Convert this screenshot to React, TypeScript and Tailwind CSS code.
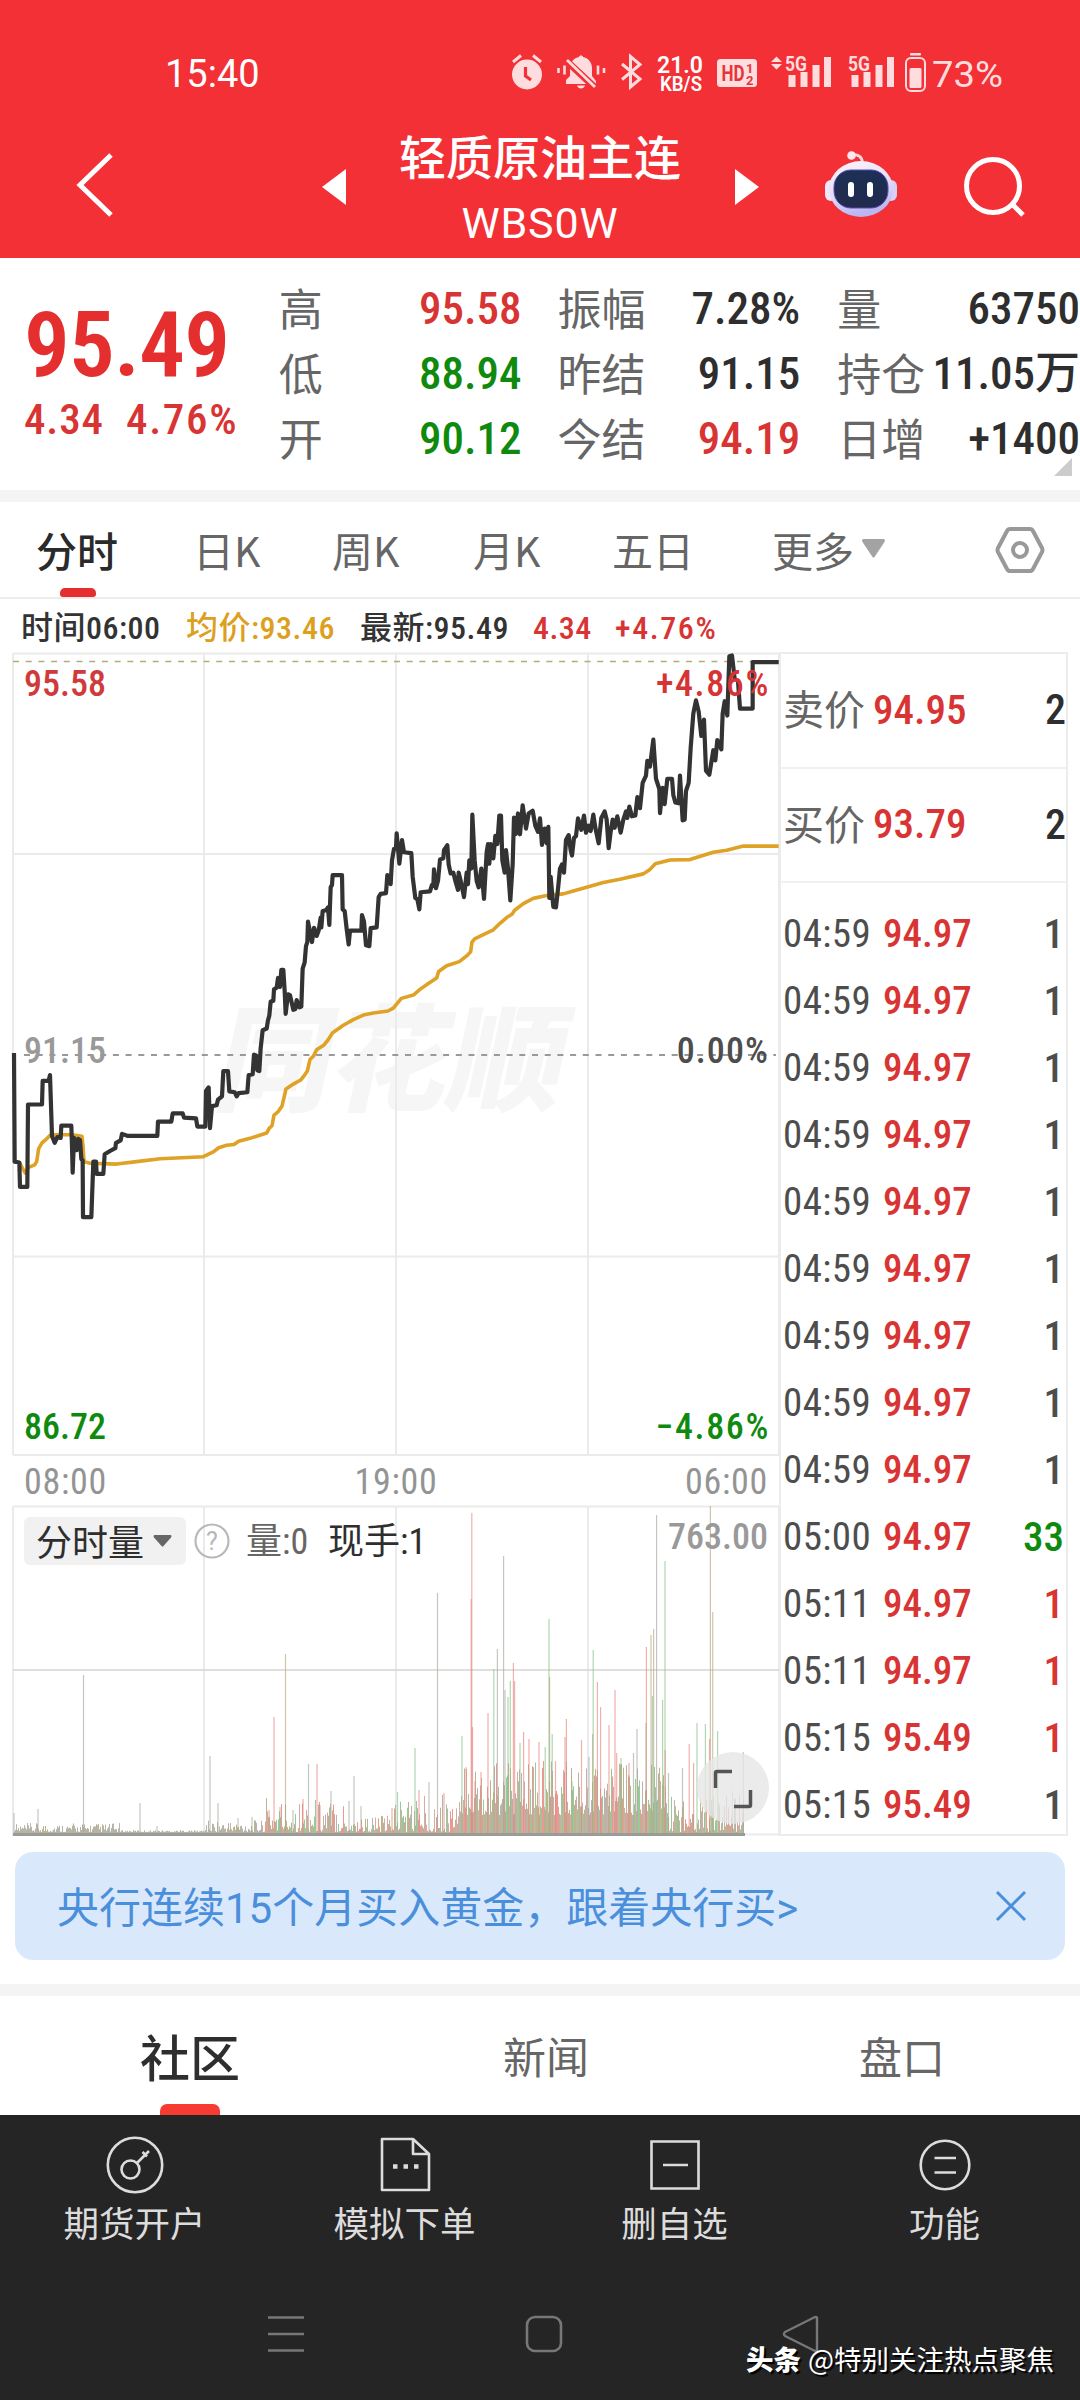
import type { ReactNode } from "react"

// Latin digits in a condensed face, Chinese falls through to Noto
const NUM = "font-['Roboto','Noto_Sans_CJK_SC',sans-serif] [font-stretch:86%] whitespace-nowrap"

type Tone = "red" | "green" | "dark" | "mid"

const TONE: Record<Tone, string> = {
  red: "text-[#d93434]",
  green: "text-[#0f8a0f]",
  dark: "text-[#2e2e2e]",
  mid: "text-[#4d4d4d]",
}

type Stat = { label: string; value: string; tone: Tone }

const STATS: Stat[][] = [
  [
    { label: "高", value: "95.58", tone: "red" },
    { label: "低", value: "88.94", tone: "green" },
    { label: "开", value: "90.12", tone: "green" },
  ],
  [
    { label: "振幅", value: "7.28%", tone: "dark" },
    { label: "昨结", value: "91.15", tone: "dark" },
    { label: "今结", value: "94.19", tone: "red" },
  ],
  [
    { label: "量", value: "63750", tone: "dark" },
    { label: "持仓", value: "11.05万", tone: "dark" },
    { label: "日增", value: "+1400", tone: "dark" },
  ],
]

type Tick = { time: string; price: string; lots: string; tone: Tone }

const TICKS: Tick[] = [
  ...Array.from({ length: 9 }, (): Tick => ({ time: "04:59", price: "94.97", lots: "1", tone: "mid" })),
  { time: "05:00", price: "94.97", lots: "33", tone: "green" },
  { time: "05:11", price: "94.97", lots: "1", tone: "red" },
  { time: "05:11", price: "94.97", lots: "1", tone: "red" },
  { time: "05:15", price: "95.49", lots: "1", tone: "red" },
  { time: "05:15", price: "95.49", lots: "1", tone: "mid" },
]

// x in thirds of a pixel, y in 1/2.45 pixel, origin at the plot's top left
const PRICE =
  "42,1012 44,1278 58,1280 60,1340 82,1340 84,1138 126,1138 128,1080 146,1080 150,1066 156,1215 164,1232 172,1218 182,1220 184,1190 214,1190 216,1240 218,1305 222,1220 230,1250 234,1222 240,1225 244,1272 248,1275 249,1414 274,1414 280,1278 288,1278 290,1308 310,1308 314,1260 330,1252 346,1245 348,1232 362,1226 366,1210 384,1215 472,1215 474,1180 514,1180 518,1160 548,1160 552,1170 588,1172 592,1192 616,1192 618,1105 626,1096 630,1196 636,1142 650,1140 654,1126 666,1118 670,1056 684,1056 688,1106 704,1108 710,1118 716,1110 742,1108 746,1066 758,1064 762,1016 768,1018 772,1054 778,1056 782,1000 788,956 800,952 804,932 808,920 812,886 820,884 822,856 830,852 834,828 840,850 844,808 850,808 854,860 857,916 864,868 870,870 880,906 886,904 890,882 898,900 904,898 908,805 914,790 918,750 922,740 924,690 930,715 936,740 942,705 950,725 956,712 962,680 964,704 968,664 978,662 984,655 988,698 990,650 992,606 996,600 998,576 1026,576 1028,660 1034,664 1040,708 1046,746 1050,712 1084,712 1086,674 1092,690 1098,748 1108,750 1112,706 1130,704 1136,630 1142,622 1158,620 1162,576 1168,580 1172,598 1176,540 1182,512 1188,510 1190,474 1198,548 1206,490 1212,520 1234,522 1238,580 1246,632 1252,635 1258,660 1262,618 1290,616 1296,600 1300,602 1302,562 1308,608 1314,590 1320,538 1330,535 1332,515 1342,503 1346,550 1352,572 1360,570 1366,590 1374,612 1376,570 1382,590 1392,630 1400,570 1404,598 1408,540 1414,560 1417,428 1424,540 1430,590 1436,606 1444,560 1452,634 1460,520 1464,500 1468,548 1472,500 1480,535 1486,480 1492,500 1498,430 1503,430 1507,540 1514,570 1518,515 1524,560 1531,638 1538,550 1542,435 1548,475 1554,425 1560,476 1568,405 1578,462 1586,425 1598,418 1606,455 1614,470 1620,437 1626,502 1634,462 1640,498 1645,458 1648,632 1652,580 1660,654 1668,655 1674,610 1680,560 1686,550 1692,570 1698,490 1706,478 1712,515 1716,528 1722,485 1728,480 1734,437 1744,465 1752,430 1758,472 1766,455 1772,468 1780,428 1786,460 1796,498 1804,436 1814,420 1820,440 1826,510 1832,470 1838,440 1844,460 1852,432 1862,472 1870,440 1878,420 1882,436 1888,408 1896,432 1906,430 1912,385 1920,412 1928,350 1938,332 1942,296 1950,310 1960,244 1968,340 1978,365 1980,424 1988,362 1994,402 2002,340 2016,340 2020,380 2026,398 2036,400 2040,332 2048,442 2054,440 2058,370 2066,350 2072,265 2080,180 2088,148 2096,175 2104,235 2112,195 2118,320 2128,330 2134,300 2140,270 2146,295 2152,245 2164,268 2168,180 2174,150 2182,185 2188,40 2196,38 2204,95 2214,100 2220,168 2258,168 2258,54 2336,54"

const AVERAGE =
  "58,1280 68,1295 76,1306 86,1292 104,1286 110,1278 116,1246 126,1232 140,1222 152,1212 215,1212 246,1216 249,1240 252,1278 270,1282 350,1284 410,1278 480,1271 610,1266 640,1254 656,1244 680,1238 702,1236 716,1228 750,1221 800,1208 808,1196 816,1190 822,1164 834,1156 846,1142 858,1100 880,1088 902,1078 914,1066 922,1056 930,1028 940,1020 950,1004 972,992 984,980 998,962 1030,944 1060,930 1090,919 1120,914 1164,909 1180,902 1204,878 1240,870 1260,856 1284,842 1310,828 1316,812 1340,798 1378,788 1400,774 1412,764 1416,740 1424,732 1450,722 1480,710 1500,694 1520,680 1536,672 1544,662 1570,646 1600,633 1640,626 1690,622 1720,615 1760,606 1810,594 1860,586 1930,573 1950,562 1966,548 2010,539 2070,538 2140,520 2180,515 2230,505 2336,505"

const RED = "#e8857f"
const GREEN = "#86c186"
const GRAY = "#a8a8a0"
const OLIVE = "#b3a67e"

// [x, height, color] of the bars that stand out of the crowd
const SPIKES: Array<[number, number, string]> = [
  [14, 22, GRAY], [38, 26, GRAY], [83.5, 160, GRAY], [140, 32, GRAY], [157, 9, GRAY],
  [210, 79, GRAY], [218, 32, GRAY], [238, 17, GRAY], [252, 18, GRAY], [269, 25, RED],
  [274, 118, RED], [280, 28, GRAY], [285.5, 181, OLIVE], [293, 25, GRAY], [303, 36, RED],
  [308.5, 71, GRAY], [317, 71, RED], [320, 30, RED], [331, 44, GRAY], [349, 34, GRAY],
  [354, 59, GRAY], [361, 29, GRAY], [392, 27, RED], [397.5, 43, GREEN], [415, 87, GREEN],
  [419, 45, RED], [429, 53, GRAY], [437.5, 242, GRAY], [444, 42, RED], [462, 99, GREEN],
  [466, 68, OLIVE], [471.8, 322, RED], [471.2, 236, RED], [472.5, 108, RED], [475, 54, RED],
  [481, 63, RED], [488, 122, RED], [493.8, 166, GREEN], [497.4, 186, GRAY], [503.6, 279, GRAY],
  [505, 145, GRAY], [508, 138, GREEN], [510.3, 154, GREEN], [513.4, 172, RED], [514.6, 154, RED],
  [520, 92, GREEN], [523.6, 103, RED], [529, 96, RED], [539, 93, RED], [545.2, 88, GREEN],
  [549, 216, GREEN], [549.6, 158, OLIVE], [552.2, 101, GREEN], [555.5, 74, RED], [565, 98, RED],
  [566.4, 116, RED], [572, 54, GREEN], [581.5, 95, RED], [589, 78, GRAY], [593.2, 185, GREEN],
  [592.6, 101, OLIVE], [597.4, 153, RED], [600.6, 128, RED], [609, 110, RED], [615, 145, RED],
  [616.7, 82, RED], [621, 77, GREEN], [629, 72, RED], [633.5, 82, GRAY], [637, 106, GRAY],
  [646.4, 188, RED], [646, 112, OLIVE], [651, 200, OLIVE], [653.6, 206, OLIVE], [652.4, 139, GREEN],
  [656.6, 320, GRAY], [662.6, 135, GREEN], [665, 274, GREEN], [665.2, 85, RED], [668.5, 62, GRAY],
  [682.5, 67, GRAY], [689.2, 91, RED], [693.6, 72, RED], [697, 112, GREEN], [705.4, 111, GREEN],
  [710.4, 329, OLIVE], [712.7, 223, OLIVE], [709.5, 96, RED], [717.6, 104, GREEN], [732.5, 44, GRAY],
  [743.3, 83, GRAY],
]

function envelope(x: number) {
  if (x < 120) return 12
  if (x < 204) return 5
  if (x < 262) return 15
  if (x < 345) return 38
  if (x < 392) return 20
  if (x < 462) return 42
  if (x < 482) return 76
  if (x < 668) return 74
  return 42
}

const BARS = Array.from({ length: 730 }, (_, i) => {
  const x = 14 + i
  const n = Math.abs(Math.sin(x * 12.9898) * 43758.5453) % 1
  const m = Math.abs(Math.sin(x * 78.233) * 12543.21) % 1
  const env = envelope(x)
  const floor = x > 464 && x < 668 ? 20 : 3
  const height = floor + (env - floor) * Math.pow(n, 1.8)
  const palette = x < 262 ? [GRAY, GRAY, OLIVE, GRAY] : [RED, GREEN, OLIVE, GRAY, "#cf9d92"]
  return { x, height, color: palette[Math.floor(m * palette.length)] }
})

function StatusBar() {
  return (
    <div className="flex h-[128px] items-end pl-[165px] pr-[76px] text-white">
      <div className="flex h-[88px] flex-1 items-start pt-[15px]">
        <span className="font-['Roboto',sans-serif] text-[38px] leading-none">15:40</span>
      </div>
      <svg className="mb-[23px] h-[65px] w-[504px]" viewBox="0 0 504 65" fill="#ffdcdd">
        {/* alarm */}
        <circle cx="27" cy="34.5" r="15" />
        <path d="M13 22l8-6.500M41 22l-8-6.500" stroke="#ffdcdd" strokeWidth="3" />
        <path d="M25.500 27v9l5.500 4" stroke="#f23036" strokeWidth="3.200" fill="none" />
        {/* muted bell */}
        <path d="M66 44v-4l4-4V28c0-6 4-10 9-11 0-2 4-2 4 0 5 1 9 5 9 11v8l4 5v3zM77 45.500h8c-1 4-7 4-8 0z" />
        <path d="M66 20.500l29 27" stroke="#f23036" strokeWidth="7" />
        <path d="M67 20l28 27" stroke="#ffdcdd" strokeWidth="2.800" />
        <path d="M58.500 28v5M64.500 25.500v9M98 25.500v9M104 28v5" stroke="#ffdcdd" strokeWidth="2.600" />
        {/* bluetooth */}
        <path d="M122 24l18 15-9.500 8V16.500l9.500 8L122 39.500" fill="none" stroke="#ffdcdd" strokeWidth="3" />
        <g className="font-['Roboto',sans-serif] font-semibold" fill="#fff">
          <text x="157" y="33" fontSize="24" textLength="46" lengthAdjust="spacingAndGlyphs">21.0</text>
          <text x="160" y="50.500" fontSize="19.500" textLength="42" lengthAdjust="spacingAndGlyphs">KB/S</text>
        </g>
        <rect x="217" y="19" width="40" height="28" rx="3.500" />
        <g className="font-['Roboto',sans-serif] font-bold" fill="#e5343a">
          <text x="221.500" y="41" fontSize="22.500" textLength="23" lengthAdjust="spacingAndGlyphs">HD</text>
          <text x="246" y="32.500" fontSize="13">1</text>
          <text x="246" y="44.500" fontSize="13">2</text>
        </g>
        <path d="M276.500 16.500l5.500 5.500h-11zM276.500 29.500l5.500-5.500h-11z" />
        {[0, 63].map((dx) => (
          <g key={dx} transform={`translate(${dx} 0)`}>
            <text x="285" y="31" fontSize="21" className="font-['Roboto',sans-serif] font-bold" textLength="22" lengthAdjust="spacingAndGlyphs">5G</text>
            <path d="M288.500 35h7v12h-7zM300.500 32h7v15h-7zM312.500 25h7v22h-7zM324 17h7v30h-7z" />
          </g>
        ))}
        <rect x="406" y="18" width="19" height="33" rx="5" fill="none" stroke="#ffdcdd" strokeWidth="2" />
        <rect x="409.500" y="28" width="12" height="20" rx="1.500" />
        <rect x="410" y="13" width="11" height="2.500" rx="1" />
        <text x="432" y="47" fontSize="37" textLength="71" lengthAdjust="spacingAndGlyphs" className="font-['Roboto',sans-serif]">73%</text>
      </svg>
    </div>
  )
}

function Robot() {
  return (
    <svg className="h-[68px] w-[74px]" viewBox="0 0 74 68">
      <defs>
        <linearGradient id="shell" x1="0" y1="0" x2="0.3" y2="1">
          <stop offset="0" stopColor="#fff5fa" />
          <stop offset="0.600" stopColor="#e3dcfa" />
          <stop offset="1" stopColor="#b9b6f2" />
        </linearGradient>
        <linearGradient id="visor" x1="0" y1="0" x2="0" y2="1">
          <stop offset="0" stopColor="#1c3055" />
          <stop offset="1" stopColor="#222a4d" />
        </linearGradient>
      </defs>
      <path d="M28 5c8-1 11 2 11.500 8" fill="none" stroke="#fbd9e2" strokeWidth="3" />
      <circle cx="28.500" cy="5.500" r="4.300" fill="#ffe9ee" />
      <rect x="2" y="30" width="12" height="21" rx="6" fill="#f3e6fa" />
      <rect x="62" y="30" width="12" height="21" rx="6" fill="#d9d0f8" />
      <ellipse cx="38" cy="39" rx="32" ry="28" fill="url(#shell)" />
      <rect x="11" y="20" width="54" height="38" rx="17" fill="url(#visor)" stroke="#5b49b0" strokeWidth="1" />
      <rect x="25" y="32" width="6" height="15" rx="3" fill="#fff" />
      <rect x="44" y="32" width="6" height="15" rx="3" fill="#fff" />
    </svg>
  )
}

function Header() {
  return (
    <header className="h-[258px] bg-[#f23036]">
      <StatusBar />
      <div className="flex h-[130px] items-center text-white">
        <div className="flex w-[322px] items-center pl-[76px]">
          <svg className="mt-[-16px] h-[66px] w-[38px]" viewBox="0 0 38 66" fill="none" stroke="#fff" strokeWidth="5">
            <path d="M35 3L4 33l31 30" />
          </svg>
        </div>
        <svg className="mt-[-12px] h-[36px] w-[24px]" viewBox="0 0 24 36" fill="#fff">
          <path d="M24 0v36L0 18z" />
        </svg>
        <div className="flex w-[388px] flex-col items-center">
          <h1 className="mt-[-11px] text-[47px] font-medium leading-[64px]">轻质原油主连</h1>
          <span className="mt-[6px] font-['Roboto',sans-serif] text-[43px] leading-[60px] tracking-[0.02em]">WBS0W</span>
        </div>
        <svg className="ml-px mt-[-12px] h-[36px] w-[24px]" viewBox="0 0 24 36" fill="#fff">
          <path d="M0 0v36l24-18z" />
        </svg>
        <div className="mt-[-19px] flex items-center pl-[64px]">
          <Robot />
          <svg className="ml-[67px] mt-[9px] h-[62px] w-[62px]" viewBox="0 0 62 62" fill="none" stroke="#fff" strokeWidth="5">
            <circle cx="29" cy="29" r="26.500" />
            <path d="M48 47l11 11" />
          </svg>
        </div>
      </div>
    </header>
  )
}

const STAT_COLUMN = [
  "w-[243px]",
  "ml-[36px] w-[243px]",
  "ml-[37px] w-[243px]",
]

function Quote() {
  return (
    <section className="flex h-[232px]">
      <div className="w-[279px] pl-[24px]">
        <div className={`mt-[41px] text-[91px] font-semibold leading-[92px] tracking-[-0.008em] text-[#e52f2f] ${NUM}`}>95.49</div>
        <div className={`mt-[4px] flex gap-[22px] text-[43px] font-medium leading-[48px] ${TONE.red} ${NUM}`}>
          <span className="tracking-[0.02em]">4.34</span>
          <span className="tracking-[0.04em]">4.76%</span>
        </div>
      </div>
      {STATS.map((column, i) => (
        <div key={i} className={`pt-[18px] ${STAT_COLUMN[i]}`}>
          {column.map((s) => (
            <div key={s.label} className="flex h-[65px] items-center justify-between">
              <span className="mt-[-3px] whitespace-nowrap text-[44px] leading-none text-[#666]">{s.label}</span>
              <span className={`text-[45px] font-medium leading-none ${TONE[s.tone]} ${NUM}`}>{s.value}</span>
            </div>
          ))}
          {i === 2 && (
            <svg className="ml-auto mr-[8px] mt-[-13px] h-[18px] w-[18px]" viewBox="0 0 18 18" fill="#ccc">
              <path d="M18 0v18H0z" />
            </svg>
          )}
        </div>
      ))}
    </section>
  )
}

function PeriodTabs() {
  return (
    <nav className="flex h-[97px] border-b-2 border-[#ececec] text-[41px] leading-[95px] text-[#666]">
      <div className="relative ml-[36px] w-[157px]">
        <span className="font-medium text-[#2a2a2a]">分时</span>
        <span className="absolute bottom-0 left-[24px] h-[9px] w-[36px] rounded-t-[5px] rounded-b-[3px] bg-[#e52f2f]" />
      </div>
      <span className="w-[139px]">日K</span>
      <span className="w-[141px]">周K</span>
      <span className="w-[139px]">月K</span>
      <span className="w-[160px]">五日</span>
      <div className="flex w-[223px] items-center">
        更多
        <svg className="ml-[8px] mt-[-2px] h-[19px] w-[23px]" viewBox="0 0 23 19" fill="#a3a3a3">
          <path d="M1 0h21q1.500 1 .5 3L12.500 18q-1 1-2 0L.500 3Q-.500 1 1 0z" />
        </svg>
      </div>
      <svg className="mt-[24px] h-[48px] w-[50px]" viewBox="0 0 50 48" fill="none" stroke="#999" strokeWidth="4" strokeLinejoin="round">
        <path d="M15 3h20q2 0 3 2l9 17q1 2 0 4l-9 17q-1 2-3 2H15q-2 0-3-2L3 26q-1-2 0-4L12 5q1-2 3-2z" />
        <circle cx="25" cy="24" r="7" />
      </svg>
    </nav>
  )
}

function InfoRow() {
  return (
    <div className={`flex h-[57px] items-center pl-[21px] pt-[1px] text-[32px] font-medium leading-none tracking-[0.015em] ${NUM}`}>
      <span className="w-[165px] text-[#333]">时间06:00</span>
      <span className="w-[174px] text-[#dc9f1e]">均价:93.46</span>
      <span className="w-[173px] text-[#333]">最新:95.49</span>
      <span className={`w-[82px] ${TONE.red}`}>4.34</span>
      <span className={`tracking-[0.05em] ${TONE.red}`}>+4.76%</span>
    </div>
  )
}

function Label({ className, children }: { className: string; children: ReactNode }) {
  return (
    <span className={`absolute text-[36px] font-medium leading-[40px] ${NUM} ${className}`}>
      {children}
    </span>
  )
}

function PriceChart() {
  return (
    <div className="relative h-[804px]">
      <div className="absolute left-[222px] top-[341px] -skew-x-12 whitespace-nowrap text-[116px] font-black leading-[116px] text-[#f6f6f6]">
        同花顺
      </div>
      <svg className="absolute left-0 top-0 h-[804px] w-[780px] overflow-visible" viewBox="0 0 780 804" fill="none">
        <path d="M13 1.500H779M13 202H779M13 604.500H779M13 803H779M13 1V803M204 1V803M396 1V803M588 1V803M779 1V803" stroke="#ebebeb" strokeWidth="2" />
        <path d="M13 9.500H779" stroke="#b5ab78" strokeWidth="1.600" strokeDasharray="6 6.700" />
        <path d="M24 403H776" stroke="#999" strokeWidth="1.800" strokeDasharray="6 6.700" />
        <g transform="translate(0 -12) scale(0.33333 0.40816)" strokeLinejoin="round">
          <polyline points={AVERAGE} stroke="#dfa126" strokeWidth="3.600" vectorEffect="non-scaling-stroke" />
          <polyline points={PRICE} stroke="#333" strokeWidth="4.200" vectorEffect="non-scaling-stroke" />
        </g>
      </svg>
      <Label className="left-[24px] top-[12px] text-[#cf3a3a]">95.58</Label>
      <Label className="right-[9px] top-[12px] tracking-[0.045em] text-[#d63434]">+4.86%</Label>
      <Label className="left-[24px] top-[379px] text-[#999]">91.15</Label>
      <Label className="right-[10px] top-[379px] tracking-[0.03em] text-[#4d4d4d]">0.00%</Label>
      <Label className="left-[24px] top-[755px] text-[#0f8a0f]">86.72</Label>
      <Label className="right-[9px] top-[755px] tracking-[0.045em] text-[#0f8a0f]">−4.86%</Label>
    </div>
  )
}

function VolumeChart() {
  return (
    <div className="relative h-[331px]">
      <svg className="absolute left-0 top-0 h-[331px] w-[780px]" viewBox="0 0 780 331">
        <path d="M13 1.500H779M13 329.500H779M13 1V331M204 1V331M396 1V331M588 1V331M779 1V331" stroke="#ebebeb" strokeWidth="2" />
        <path d="M13 165H779" stroke="#d5d5d0" strokeWidth="1.500" />
        {BARS.map((b) => (
          <rect key={b.x} x={b.x} y={330 - b.height} width="1" height={b.height} fill={b.color} opacity="0.850" />
        ))}
        {SPIKES.map(([x, h, color], i) => (
          <rect key={i} x={x - 0.6} y={330 - h} width="1.200" height={h} fill={color} opacity="0.650" />
        ))}
        <path d="M13 329.500H745" stroke="#9b9b97" strokeWidth="3" />
      </svg>
      <div className="absolute left-[24px] top-[12px] flex h-[48px] items-center">
        <div className="flex h-full w-[162px] items-center rounded-[6px] bg-[#f1f1f1] pl-[12px] text-[36px] leading-none text-[#2e2e2e]">
          <span className="mt-[-3px]">分时量</span>
          <svg className="ml-[9px] h-[12px] w-[19px]" viewBox="0 0 19 12" fill="#666">
            <path d="M1 0h17q1 1 0 2.500L10.500 11q-1 1-2 0L1 2.500Q0 1 1 0z" />
          </svg>
        </div>
        <svg className="ml-[8px] h-[36px] w-[36px]" viewBox="0 0 36 36" fill="none" stroke="#b8b8b8" strokeWidth="2.200">
          <circle cx="18" cy="18" r="16.500" />
          <text x="18" y="27" textAnchor="middle" fontSize="25" fill="#b8b8b8" stroke="none" className="font-['Roboto',sans-serif]">?</text>
        </svg>
        <span className={`ml-[16px] mt-[2px] w-[82px] text-[36px] leading-none text-[#666] ${NUM}`}>量:0</span>
        <span className={`mt-[2px] text-[36px] leading-none text-[#2e2e2e] ${NUM}`}>现手:1</span>
      </div>
      <Label className="right-[11px] top-[12px] text-[#999]">763.00</Label>
      <div className="absolute left-[697px] top-[247px] h-[72px] w-[72px] rounded-full bg-[#e6e6e6]/80">
        <svg className="h-full w-full" viewBox="0 0 72 72" fill="none" stroke="#555" strokeWidth="3.500">
          <path d="M18.500 36V21q0-1.500 1.500-1.500h15M53.500 38v15q0 1.500-1.500 1.500H37" />
        </svg>
      </div>
    </div>
  )
}

function OrderBook() {
  const quotes = [
    { label: "卖价", price: "94.95" },
    { label: "买价", price: "93.79" },
  ]
  return (
    <div className="h-[1184px] w-[289px] border-2 border-[#ededed]">
      {quotes.map((q) => (
        <div key={q.label} className="flex h-[114.500px] items-center border-b-2 border-[#f1f1f1] pl-[2px]">
          <span className="mt-[-5px] text-[41px] leading-none text-[#666]">{q.label}</span>
          <span className={`ml-[8px] flex-1 text-[41px] font-medium leading-none ${TONE.red} ${NUM}`}>{q.price}</span>
          <span className={`text-[42px] font-medium leading-none ${TONE.dark} ${NUM}`}>2</span>
        </div>
      ))}
      <div className="pt-[18px]">
        {TICKS.map((t, i) => (
          <div key={i} className={`flex h-[67px] items-center pl-[2px] pr-[2px] text-[39px] leading-none ${NUM}`}>
            <span className={`w-[100px] font-[450] tracking-[0.01em] ${TONE.mid}`}>{t.time}</span>
            <span className={`flex-1 font-medium ${TONE.red}`}>{t.price}</span>
            <span className={`text-[41px] font-medium ${TONE[t.tone]}`}>{t.lots}</span>
          </div>
        ))}
      </div>
    </div>
  )
}

function Banner() {
  return (
    <div className="ml-[15px] mt-[16px] flex h-[108px] w-[1050px] items-center justify-between rounded-[18px] bg-[#dae8fb] pl-[42px] pr-[38px]">
      <span className="mt-[5px] whitespace-nowrap font-['Roboto','Noto_Sans_CJK_SC',sans-serif] text-[42px] leading-none text-[#4a8fdc]">
        央行连续15个月买入黄金，跟着央行买&gt;
      </span>
      <svg className="h-[32px] w-[32px]" viewBox="0 0 32 32" stroke="#4a8fdc" strokeWidth="3">
        <path d="M2 2l28 28M30 2L2 30" />
      </svg>
    </div>
  )
}

function FeedTabs() {
  return (
    <div className="flex h-[119px] pl-[12px] text-[43px] leading-[119px] text-[#666]">
      <div className="relative w-[356px] text-center text-[50px] font-medium text-[#2e2e2e]">
        社区
        <span className="absolute bottom-0 left-[148px] h-[11px] w-[60px] rounded-t-[7px] bg-[#f53b32]" />
      </div>
      <div className="w-[356px] text-center">新闻</div>
      <div className="w-[356px] text-center">盘口</div>
    </div>
  )
}

function ActionIcon({ name }: { name: string }) {
  return (
    <svg className="h-[60px] w-[60px]" viewBox="0 0 60 60" fill="none" stroke="#dcdcdc" strokeWidth="2.600">
      {name === "期货开户" && (
        <>
          <circle cx="30" cy="30" r="27.200" />
          <circle cx="25.500" cy="34.500" r="9" />
          <path d="M32 28l12-12M37.500 17l4.500 4.500" />
        </>
      )}
      {name === "模拟下单" && (
        <>
          <path d="M38 4H7v51h47V19zM38 4v15h16" strokeLinejoin="round" />
          <path d="M18 31.500h4.500M28.500 31.500h4.500M39 31.500h4.500" strokeWidth="4.500" />
        </>
      )}
      {name === "删自选" && <path d="M6.500 6.500h47v47h-47zM18 30h25" />}
      {name === "功能" && (
        <>
          <circle cx="30" cy="30" r="24.300" />
          <path d="M19.500 23h21.500M19.500 37.500h21.500" />
        </>
      )}
    </svg>
  )
}

function BottomBar() {
  return (
    <footer className="relative h-[285px] bg-[#252525]">
      <div className="flex pt-[20px]">
        {["期货开户", "模拟下单", "删自选", "功能"].map((name) => (
          <div key={name} className="flex w-[270px] flex-col items-center pr-[1px]">
            <ActionIcon name={name} />
            <span className="mt-[4px] text-[35.500px] leading-[46px] text-[#dcdcdc]">{name}</span>
          </div>
        ))}
      </div>
      <div className="flex justify-between pl-[267px] pr-[260px] pt-[70px]">
        <svg className="h-[38px] w-[38px]" viewBox="0 0 38 38" stroke="#777" strokeWidth="2.600">
          <path d="M1 2.500h36M1 19h36M1 35.500h36" />
        </svg>
        <svg className="h-[38px] w-[38px]" viewBox="0 0 38 38" fill="none" stroke="#777" strokeWidth="2.600">
          <rect x="2" y="2" width="34" height="34" rx="8" />
        </svg>
        <svg className="h-[38px] w-[38px]" viewBox="0 0 38 38" fill="none" stroke="#777" strokeWidth="2.400" strokeLinejoin="round">
          <path d="M35 2.500v33q-1 1-3 0L3 21q-2-2 0-4L32 2.500q2-1 3 0z" />
        </svg>
      </div>
      <div className="absolute left-[746px] top-[224px] flex items-center gap-[7px] whitespace-nowrap text-[27.500px] leading-[38px] text-white [text-shadow:2px_2px_1px_#000]">
        <span className="font-black">头条</span>
        <span>@特别关注热点聚焦</span>
      </div>
    </footer>
  )
}

export default function App() {
  return (
    <div className="h-[2400px] w-[1080px] overflow-hidden bg-white font-['Noto_Sans_CJK_SC',sans-serif]">
      <Header />
      <Quote />
      <div className="h-[12px] bg-[#f4f4f4]" />
      <PeriodTabs />
      <InfoRow />
      <div className="-mt-[4px] flex">
        <div className="w-[779px]">
          <PriceChart />
          <div className={`flex h-[49px] items-center justify-between pl-[24px] pr-[11px] pt-[3px] text-[36px] font-[450] leading-none tracking-[0.02em] text-[#949494] ${NUM}`}>
            <span>08:00</span>
            <span>19:00</span>
            <span>06:00</span>
          </div>
          <VolumeChart />
        </div>
        <OrderBook />
      </div>
      <Banner />
      <div className="mt-[24px] h-[12px] bg-[#f4f4f4]" />
      <FeedTabs />
      <BottomBar />
    </div>
  )
}
